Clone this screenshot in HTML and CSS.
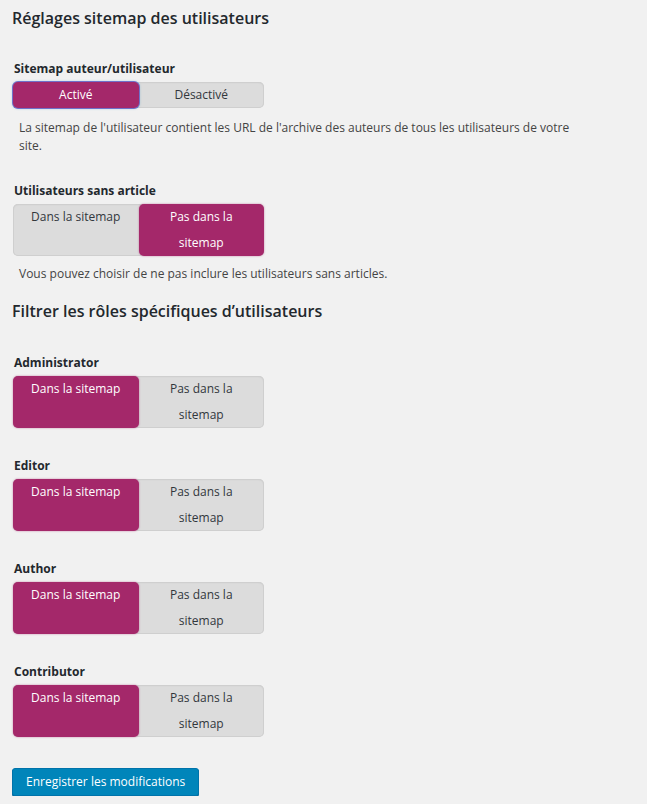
FILE: index.html
```html
<!DOCTYPE html>
<html lang="fr">

<head>
	<meta charset="UTF-8">
	<meta name="viewport" content="width=device-width, initial-scale=1.0">
	<title>Réglages sitemap des utilisateurs</title>
	<link rel="stylesheet" href="styles.css">
</head>

<body>

	<div class="settings-wrap">
		<h2 class="section-title">Réglages sitemap des utilisateurs</h2>

		<div class="field" id="author-sitemap">
			<div class="field-label">Sitemap auteur/utilisateur</div>
			<div class="switch">
				<span class="switch-opt active focused">Activé</span>
				<span class="switch-opt">Désactivé</span>
			</div>
			<p class="field-desc">La sitemap de l'utilisateur contient les URL de l'archive des auteurs de tous les utilisateurs de votre site.</p>
		</div>

		<div class="field" id="users-no-posts">
			<div class="field-label">Utilisateurs sans article</div>
			<div class="switch">
				<span class="switch-opt">Dans la sitemap</span>
				<span class="switch-opt active">Pas dans la sitemap</span>
			</div>
			<p class="field-desc">Vous pouvez choisir de ne pas inclure les utilisateurs sans articles.</p>
		</div>

		<h2 class="section-title roles-title">Filtrer les rôles spécifiques d’utilisateurs</h2>

		<div class="field role">
			<div class="field-label">Administrator</div>
			<div class="switch">
				<span class="switch-opt active">Dans la sitemap</span>
				<span class="switch-opt">Pas dans la sitemap</span>
			</div>
		</div>

		<div class="field role">
			<div class="field-label">Editor</div>
			<div class="switch">
				<span class="switch-opt active">Dans la sitemap</span>
				<span class="switch-opt">Pas dans la sitemap</span>
			</div>
		</div>

		<div class="field role">
			<div class="field-label">Author</div>
			<div class="switch">
				<span class="switch-opt active">Dans la sitemap</span>
				<span class="switch-opt">Pas dans la sitemap</span>
			</div>
		</div>

		<div class="field role">
			<div class="field-label">Contributor</div>
			<div class="switch">
				<span class="switch-opt active">Dans la sitemap</span>
				<span class="switch-opt">Pas dans la sitemap</span>
			</div>
		</div>

		<div class="submit-row">
			<button class="button-primary" type="button">Enregistrer les modifications</button>
		</div>
	</div>

</body>

</html>
```

FILE: styles.css
```css
body {
	margin: 0;
	background-color: #f1f1f1;
	color: #444;
	font-family: 'Open Sans', sans-serif;
	font-size: 12px;
}

.settings-wrap {
	width: 600px;
	padding: 4px 12px 0 12px;
}

.section-title {
	margin: 0;
	font-size: 16px;
	font-weight: 600;
	line-height: 28px;
	color: #23282d;
}

.field {
	margin-top: 29px;
	padding-left: 2px;
}

.field-label {
	font-weight: 700;
	font-size: 12px;
	line-height: 16px;
	color: #23282d;
	margin-bottom: 5px;
}

.switch {
	display: flex;
	width: 251px;
	border-radius: 5px;
	background-color: #dcdcdc;
	box-shadow: inset 0 0 0 1px #cfcfcf, inset 0 1px 2px rgba(0, 0, 0, 0.06);
	margin-left: -1px;
}

.switch-opt {
	flex: 1;
	padding: 0 18px;
	text-align: center;
	line-height: 26px;
	color: #32373c;
}

.switch-opt.active {
	background-color: #a4286a;
	color: #fff;
	border-radius: 5px;
	box-shadow: 0 0 2px rgba(164, 40, 106, 0.6);
}

.switch-opt.focused {
	box-shadow: 0 0 0 1px #6f71c9, 0 0 3px rgba(30, 140, 190, 0.6);
}

.field-desc {
	max-width: 560px;
	margin: 11px 0 0 5px;
	line-height: 18px;
	color: #444;
}

#users-no-posts {
	margin-top: 28px;
}

#users-no-posts .field-desc {
	margin-top: 9px;
}

.roles-title {
	margin-top: 14px;
}

.field.role {
	margin-top: 30px;
}

.submit-row {
	margin-top: 31px;
}

.button-primary {
	height: 28px;
	padding: 0 13px;
	border: 1px solid #0073aa;
	border-radius: 3px;
	background-color: #0085ba;
	box-shadow: 0 1px 0 #006799;
	color: #fff;
	font-family: 'Open Sans', sans-serif;
	font-size: 12px;
	line-height: 26px;
	cursor: pointer;
}
```
